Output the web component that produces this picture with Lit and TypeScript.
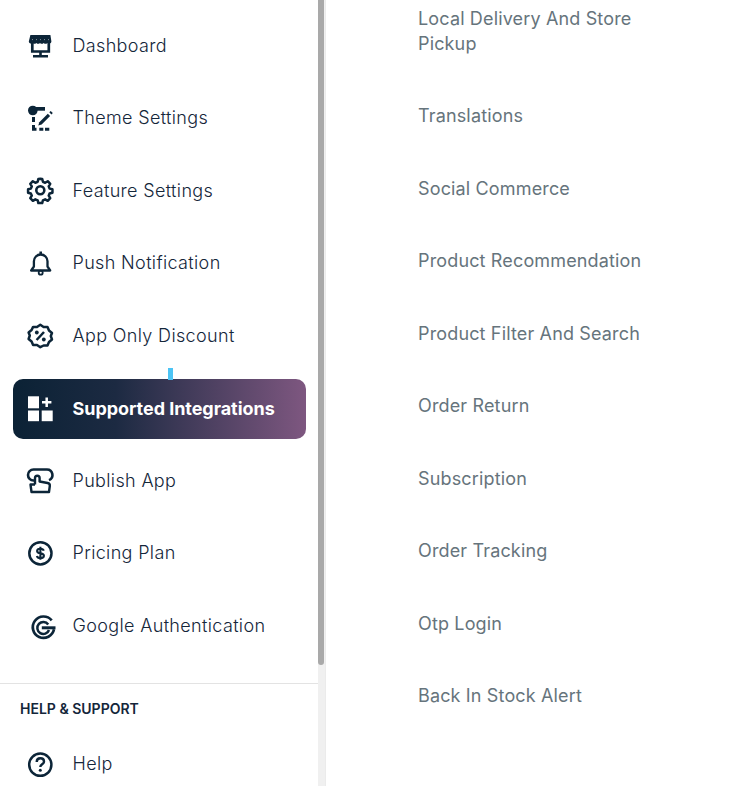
import { LitElement, html, css, svg } from "lit";
import { customElement } from "lit/decorators.js";

const icons: Record<string, unknown> = {
  dashboard: svg`<path d="M3 3h20l1 6.500a2.300 2.300 0 0 1-4 1.500 2.700 2.700 0 0 1-3.700 0 2.700 2.700 0 0 1-3.700 0 2.700 2.700 0 0 1-3.700 0 2.700 2.700 0 0 1-3.700 0 2.300 2.300 0 0 1-3.800-1.500z" fill="currentColor" transform="translate(-.6 0)"/><path d="M4.300 10.500V19.500H20.800V10.500" fill="none" stroke="currentColor" stroke-width="2.700"/><path d="M12.500 20v4M5 24.200h15" fill="none" stroke="currentColor" stroke-width="2.600"/><path d="M4 7.600h1M8 7.600h1M12 7.600h1M16 7.600h1M20 7.600h1" stroke="#fff" stroke-width=".7" opacity=".7"/>`,
  theme: svg`<circle cx="4.800" cy="5.500" r="4.800" fill="currentColor"/><path d="M5 2h12v3.700H5z" fill="currentColor"/><path d="M5.500 12v5M5.500 20v5.700M5 24.200h3.500M11.300 24.200h4M17 24.200h4.300" fill="none" stroke="currentColor" stroke-width="3"/><path d="M10.300 20.500l1-3.200 8.500-8.500 2.300 2.300-8.500 8.500z" fill="currentColor"/><path d="M21.300 7.300l1.400-1.400 2.100 2.100-1.400 1.400z" fill="currentColor"/>`,
  gear: svg`<g transform="translate(-.7 .3)"><path d="M13 2l2 .2.800 3 2.300 1 2.700-1.600 2.600 2.800-1.600 2.600.9 2.300 3 .7v3.600l-3 .8-.9 2.300 1.600 2.600-2.600 2.700-2.700-1.500-2.300 1-.8 2.900h-4l-.7-2.900-2.400-1-2.600 1.500-2.700-2.700 1.600-2.600-1-2.300-2.900-.8v-3.600l2.900-.7 1-2.300-1.600-2.600 2.700-2.800 2.600 1.600 2.400-1 .7-3z" transform="translate(0 -.5) scale(.96) translate(.5 0)" fill="none" stroke="currentColor" stroke-width="2.600" stroke-linejoin="round"/><circle cx="13" cy="13" r="4" fill="none" stroke="currentColor" stroke-width="2.600"/></g>`,
  bell: svg`<path d="M12.700 4.500a6.800 6.800 0 0 0-6.800 6.800v5.200L3.200 20.500h19L19.500 16.500v-5.200a6.800 6.800 0 0 0-6.800-6.800z" fill="none" stroke="currentColor" stroke-width="2.300" stroke-linejoin="round"/><path d="M12.700 1.500v3" stroke="currentColor" stroke-width="2.600"/><circle cx="12.700" cy="22.700" r="2" fill="none" stroke="currentColor" stroke-width="1.800"/>`,
  discount: svg`<g transform="translate(-.7 1)"><path d="M13 1.800l3.300 2.200 3.900-.1 1.500 3.600 3 2.500-1.200 3 1.200 3.500-3 2.500-1.500 3.400-3.900.1L13 24.200 9.700 22l-3.900-.1-1.500-3.400-3-2.500 1.200-3.500-1.200-3 3-2.500L5.800 3.900l3.900.1z" fill="none" stroke="currentColor" stroke-width="2.500" stroke-linejoin="round"/><path d="M9.300 17l7.400-8" stroke="currentColor" stroke-width="2.500"/><circle cx="9.500" cy="9.500" r="1.900" fill="currentColor"/><circle cx="16.500" cy="16.500" r="1.900" fill="currentColor"/></g>`,
  apps: svg`<rect x="0" y="0.300" width="11" height="12" fill="currentColor"/><rect x="0" y="14.500" width="11" height="10.700" fill="currentColor"/><rect x="13.700" y="14.500" width="11" height="10.700" fill="currentColor"/><path d="M18.700 1.500v9.400M14 6.200h9.400" stroke="currentColor" stroke-width="2.500"/>`,
  publish: svg`<path d="M7 13.500H5.500a5.500 5.500 0 0 1 0-11h13.500a5.500 5.500 0 0 1 2 10.600" fill="none" stroke="currentColor" stroke-width="2.600"/><path d="M7 17.500V11a2.300 2.300 0 0 1 4.600 0v3.500l8 1.500c1.500.3 2.400 1.500 2.200 3L21 25H3.500l-1-7.500h4.500" fill="none" stroke="currentColor" stroke-width="2.400" stroke-linejoin="round"/>`,
  dollar: svg`<circle cx="12.400" cy="13.300" r="11.100" fill="none" stroke="currentColor" stroke-width="2.500"/><path d="M15.700 10.700c-.3-1.300-1.500-2-3.300-2-1.900 0-3.300.9-3.300 2.300 0 3.500 6.800 1.300 6.800 4.700 0 1.400-1.500 2.300-3.500 2.300-1.800 0-3.200-.8-3.500-2.100M12.400 6.800v13" fill="none" stroke="currentColor" stroke-width="2.100"/>`,
  google: svg`<path d="M23.700 8.300A10.700 10.700 0 1 0 26 17.300" fill="none" stroke="currentColor" stroke-width="2.700"/><path d="M20.200 12.500A6 6 0 1 0 21 18" fill="none" stroke="currentColor" stroke-width="2.500"/><path d="M13.800 15.800H27.500" stroke="currentColor" stroke-width="3"/>`,
  help: svg`<circle cx="12.300" cy="13.700" r="11.100" fill="none" stroke="currentColor" stroke-width="2.500"/><path d="M8.700 11c0-2.200 1.500-3.700 3.600-3.700s3.700 1.300 3.700 3.200c0 2.900-3.700 2.700-3.700 5.500" fill="none" stroke="currentColor" stroke-width="2.400"/><circle cx="12.300" cy="19.200" r="1.500" fill="currentColor"/>`,
};

const nav = [
  ["dashboard", "Dashboard"],
  ["theme", "Theme Settings"],
  ["gear", "Feature Settings"],
  ["bell", "Push Notification"],
  ["discount", "App Only Discount"],
  ["apps", "Supported Integrations"],
  ["publish", "Publish App"],
  ["dollar", "Pricing Plan"],
  ["google", "Google Authentication"],
];

const subs = [
  "Translations",
  "Social Commerce",
  "Product Recommendation",
  "Product Filter And Search",
  "Order Return",
  "Subscription",
  "Order Tracking",
  "Otp Login",
  "Back In Stock Alert",
];

@customElement("app-root")
export class AppRoot extends LitElement {
  static styles = css`
    :host {
      display: grid;
      grid-template-columns: 318px 7px 1px 1fr;
      height: 786px;
      overflow: hidden;
      background: #fff;
      font-family: Inter, "Noto Sans", sans-serif;
      font-size: 18px;
      color: #14263a;
    }
    .side {
      display: flex;
      flex-direction: column;
      padding-top: 15.3px;
      min-width: 0;
      overflow: hidden;
    }
    .nav {
      display: flex;
      flex-direction: column;
      gap: 12.5px;
      padding: 0 12px 0 13px;
    }
    .row {
      position: relative;
      display: flex;
      align-items: center;
      gap: 18.5px;
      height: 60px;
      padding-left: 15px;
      border-radius: 10px;
      font-weight: 300;
      letter-spacing: 0.35px;
      white-space: nowrap;
    }
    .row svg {
      flex: none;
      width: 26px;
      height: 26px;
      color: #0c2538;
      overflow: visible;
    }
    .row.active {
      margin: 1px 0 -1px;
      background: linear-gradient(90deg, #0b2235 0%, #1c2a42 35%, #7e5780 100%);
      color: #fff;
      font-weight: 700;
      letter-spacing: -0.05px;
    }
    .row.active svg {
      color: #fff;
    }
    .mark {
      position: absolute;
      left: 155px;
      top: -11px;
      width: 5px;
      height: 12px;
      background: #4cc4f5;
    }
    .support {
      margin-top: 27.7px;
      border-top: 1px solid #e3e3e3;
      padding: 16px 0 0 20px;
      font-size: 14px;
      font-weight: 600;
      line-height: 18px;
      color: #14263a;
    }
    .help {
      padding: 16px 12px 0 13px;
    }
    .track {
      background: #f0f0f0;
    }
    .thumb {
      height: 665px;
      width: 6px;
      background: #a9a9a9;
      border-radius: 0 0 3px 3px;
    }
    .rule {
      background: #ebebeb;
    }
    .main {
      display: flex;
      flex-direction: column;
      gap: 12.5px;
      padding: 0 92px;
      min-width: 0;
      color: #66747c;
      font-weight: 400;
      letter-spacing: 0.15px;
    }
    .sub {
      display: flex;
      align-items: center;
      height: 60px;
      white-space: nowrap;
    }
    .wrap {
      display: block;
      height: auto;
      padding-top: 6px;
      margin-bottom: 17px;
      line-height: 25px;
      white-space: normal;
      width: 230px;
    }
  `;

  private icon(name: string) {
    return html`<svg viewBox="0 0 26 26" aria-hidden="true">${icons[name]}</svg>`;
  }

  render() {
    return html`
      <aside class="side">
        <div class="nav">
          ${nav.map(
            ([icon, label]) => html`
              <div class="row ${icon === "apps" ? "active" : ""}">
                ${this.icon(icon)}<span>${label}</span>
                ${icon === "apps" ? html`<i class="mark"></i>` : ""}
              </div>
            `
          )}
        </div>
        <div class="support">HELP &amp; SUPPORT</div>
        <div class="help">
          <div class="row">${this.icon("help")}<span>Help</span></div>
        </div>
      </aside>
      <div class="track"><div class="thumb"></div></div>
      <div class="rule"></div>
      <main class="main">
        <div class="sub wrap">Local Delivery And Store Pickup</div>
        ${subs.map((s) => html`<div class="sub">${s}</div>`)}
      </main>
    `;
  }
}
